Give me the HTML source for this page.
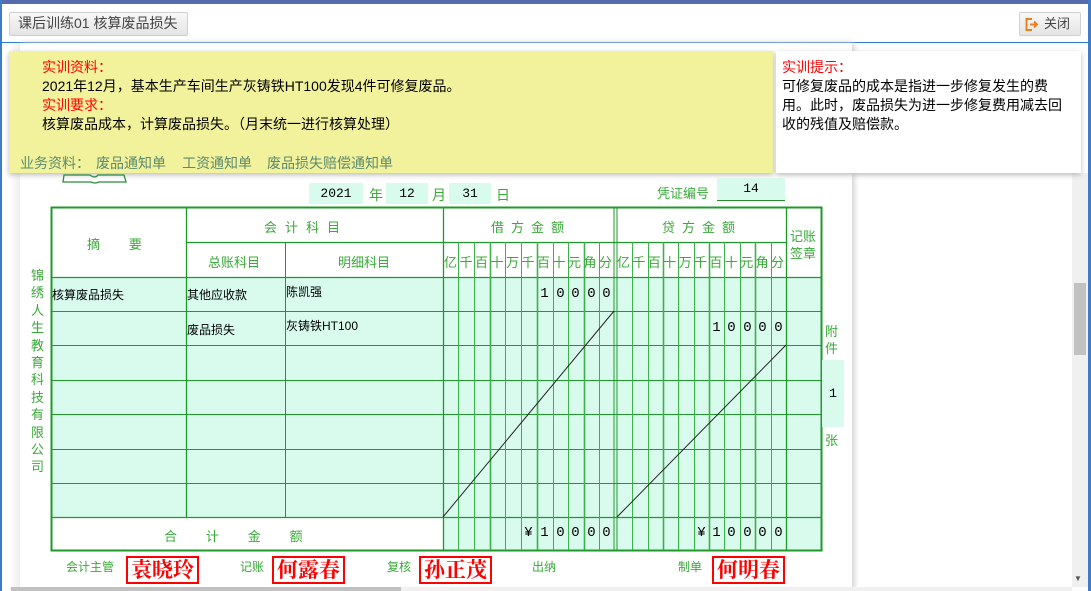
<!DOCTYPE html>
<html><head><meta charset="utf-8">
<style>
*{margin:0;padding:0;box-sizing:border-box}
body{width:1091px;height:591px;overflow:hidden;background:#fff;font-family:"Liberation Sans","Noto Sans CJK SC",sans-serif;position:relative}
.a{position:absolute;white-space:nowrap}
.g{color:#3aa83a}
.btn{position:absolute;border:1px solid #d0d0d0;border-radius:2px;background:linear-gradient(#f8f8f8,#e4e4e4);font-size:13px;color:#444;line-height:21px}
.box{position:absolute;background:#d8fbee;font-family:"Liberation Mono",monospace;font-size:13px;text-align:center;color:#000}
.sig{position:absolute;border:2px solid #f00;color:#f00;font-weight:bold;font-size:21px;font-family:"Liberation Serif","Noto Serif CJK SC",serif;line-height:24px;padding:0 3px;background:#fff}
.d{position:absolute;font-family:"Liberation Mono",monospace;font-size:14px;width:15px;text-align:center}
.y{position:absolute;font-size:14px;line-height:19px;white-space:nowrap}
</style></head><body>
<div class="a" style="left:0;top:0;width:1091px;height:4px;background:#566bad"></div>
<div class="a" style="left:0;top:0;width:2px;height:591px;background:#3e7cc8"></div>
<div class="a" style="left:1088px;top:0;width:3px;height:591px;background:#3e7cc8"></div>
<div class="a" style="left:0;top:42px;width:1091px;height:1px;background:#2b7fd0"></div>
<div class="btn" style="left:9px;top:12px;width:179px;height:24px;padding-left:8px;font-size:14px">课后训练01 核算废品损失</div>
<div class="btn" style="left:1019px;top:12px;width:62px;height:24px;padding-left:24px">关闭
<svg style="position:absolute;left:5px;top:5px" width="14" height="13"><path d="M7 1H1.5V12H7" fill="none" stroke="#e8821e" stroke-width="2"/><path d="M5 6.5H11M9 3.5L12 6.5L9 9.5" fill="none" stroke="#e8821e" stroke-width="2"/></svg></div>

<div class="a" style="left:20px;top:43px;width:832px;height:548px;background:#fff;box-shadow:2px 0 6px #ccc"></div>
<div class="a" style="left:10px;top:43px;width:10px;height:548px;background:linear-gradient(90deg,#fff,#eee)"></div>
<div class="a" style="left:1072px;top:173px;width:16px;height:414px;background:#f0f0f0"></div>
<div class="a" style="left:1074px;top:283px;width:12px;height:72px;background:#c1c1c1"></div>
<div class="a" style="left:1074px;top:574px;font-size:8px;color:#555">▼</div>
<div class="a" style="left:10px;top:587px;width:1062px;height:4px;background:#f0f0f0"></div>
<div class="a" style="left:11px;top:587px;width:390px;height:4px;background:#c1c1c1"></div>

<div class="a" style="left:9px;top:51px;width:764px;height:122px;background:#f2f29c;box-shadow:0 2px 5px #bbb"></div>
<div class="y" style="left:42px;top:58px;color:#f00">实训资料：</div>
<div class="y" style="left:42px;top:77px;color:#000">2021年12月，基本生产车间生产灰铸铁HT100发现4件可修复废品。</div>
<div class="y" style="left:42px;top:96px;color:#f00">实训要求：</div>
<div class="y" style="left:42px;top:115px;color:#000">核算废品成本，计算废品损失。（月末统一进行核算处理）</div>
<div class="y" style="left:20px;top:154px;color:#5b8a6e">业务资料：</div>
<div class="y" style="left:96px;top:154px;color:#5b8a6e">废品通知单</div>
<div class="y" style="left:182px;top:154px;color:#5b8a6e">工资通知单</div>
<div class="y" style="left:267px;top:154px;color:#5b8a6e">废品损失赔偿通知单</div>
<div class="a" style="left:776px;top:51px;width:305px;height:122px;background:#fff;box-shadow:0 2px 5px #bbb"></div>
<div class="y" style="left:782px;top:58px;color:#f00">实训提示：</div>
<div class="y" style="left:782px;top:77px;width:284px;color:#000;white-space:normal">可修复废品的成本是指进一步修复发生的费用。此时，废品损失为进一步修复费用减去回收的残值及赔偿款。</div>

<svg class="a" style="left:62px;top:173px" width="66" height="12"><path d="M2 2H28Q33 6 36 2H62L64 9H37Q33 11 29 9H1Z" fill="none" stroke="#2e8b3a" stroke-width="1.3"/></svg>

<div class="box" style="left:309px;top:183px;width:54px;height:21px;line-height:21px">2021</div>
<div class="a g" style="left:369px;top:185px;font-size:14px">年</div>
<div class="box" style="left:386px;top:183px;width:42px;height:21px;line-height:21px">12</div>
<div class="a g" style="left:432px;top:185px;font-size:14px">月</div>
<div class="box" style="left:449px;top:183px;width:42px;height:21px;line-height:21px">31</div>
<div class="a g" style="left:496px;top:185px;font-size:14px">日</div>
<div class="a g" style="left:657px;top:183px;font-size:13px">凭证编号</div>
<div class="box" style="left:717px;top:178px;width:68px;height:23px;line-height:21px;border-bottom:1px solid #2a8a2a">14</div>

<div class="a" style="left:51px;top:277px;width:770px;height:240px;background:#d8fbee"></div>
<div class="a" style="left:443px;top:517px;width:378px;height:33px;background:#d8fbee"></div>
<svg class="a" style="left:0;top:0" width="1091" height="591">
<g stroke="#1f9a2a" stroke-width="1" fill="none">
<rect x="51.5" y="207.5" width="770" height="343" stroke-width="2"/>
<line x1="186.5" y1="207" x2="186.5" y2="517" stroke-width="1.3"/>
<line x1="285.5" y1="242" x2="285.5" y2="517"/>
<line x1="443.5" y1="207" x2="443.5" y2="550" stroke-width="1.3"/>
<line x1="614" y1="207" x2="614" y2="550"/>
<line x1="617" y1="207" x2="617" y2="550"/>
<line x1="786.5" y1="207" x2="786.5" y2="550" stroke-width="1.3"/>
<line x1="186" y1="242.5" x2="786" y2="242.5" stroke-width="1.3"/>
<line x1="51" y1="277.5" x2="821" y2="277.5" stroke-width="1.3"/>
<line x1="51" y1="311.5" x2="821" y2="311.5"/>
<line x1="51" y1="345.5" x2="821" y2="345.5"/>
<line x1="51" y1="380.5" x2="821" y2="380.5"/>
<line x1="51" y1="414.5" x2="821" y2="414.5"/>
<line x1="51" y1="449.5" x2="821" y2="449.5"/>
<line x1="51" y1="483.5" x2="821" y2="483.5"/>
<line x1="51" y1="517.5" x2="821" y2="517.5" stroke-width="1.3"/>
</g>
<g stroke="#3cb04a" stroke-width="1">
<line x1="458.5" y1="242" x2="458.5" y2="550"/><line x1="474.5" y1="242" x2="474.5" y2="550"/><line x1="490.5" y1="242" x2="490.5" y2="550" stroke-width="1.6"/><line x1="505.5" y1="242" x2="505.5" y2="550"/><line x1="521.5" y1="242" x2="521.5" y2="550"/><line x1="537.5" y1="242" x2="537.5" y2="550" stroke-width="1.6"/><line x1="553.5" y1="242" x2="553.5" y2="550"/><line x1="568.5" y1="242" x2="568.5" y2="550"/><line x1="584.5" y1="242" x2="584.5" y2="550" stroke-width="1.6"/><line x1="599.5" y1="242" x2="599.5" y2="550"/>
<line x1="632.5" y1="242" x2="632.5" y2="550"/><line x1="648.5" y1="242" x2="648.5" y2="550"/><line x1="663.5" y1="242" x2="663.5" y2="550" stroke-width="1.6"/><line x1="678.5" y1="242" x2="678.5" y2="550"/><line x1="694.5" y1="242" x2="694.5" y2="550"/><line x1="709.5" y1="242" x2="709.5" y2="550" stroke-width="1.6"/><line x1="724.5" y1="242" x2="724.5" y2="550"/><line x1="740.5" y1="242" x2="740.5" y2="550"/><line x1="755.5" y1="242" x2="755.5" y2="550" stroke-width="1.6"/><line x1="771.5" y1="242" x2="771.5" y2="550"/>
</g>
<line x1="443" y1="517" x2="614" y2="311" stroke="#222" stroke-width="1"/>
<line x1="617" y1="517" x2="786" y2="345" stroke="#222" stroke-width="1"/>
</svg>
<div class="a g" style="left:87px;top:234px;font-size:13px">摘&nbsp;&nbsp;&nbsp;&nbsp;&nbsp;&nbsp;&nbsp;&nbsp;要</div>
<div class="a g" style="left:264px;top:217px;font-size:13px;letter-spacing:8px">会计科目</div>
<div class="a g" style="left:208px;top:252px;font-size:13px">总账科目</div>
<div class="a g" style="left:338px;top:252px;font-size:13px">明细科目</div>
<div class="a g" style="left:491px;top:217px;font-size:13px;letter-spacing:7px">借方金额</div>
<div class="a g" style="left:662px;top:217px;font-size:13px;letter-spacing:7px">贷方金额</div>
<div class="a g" style="left:790px;top:228px;font-size:13px;line-height:17px;white-space:normal;width:30px">记账签章</div>
<div class="a g" style="left:444px;top:252px;font-size:13px;letter-spacing:2.5px">亿千百十万千百十元角分</div>
<div class="a g" style="left:617px;top:252px;font-size:13px;letter-spacing:2.4px">亿千百十万千百十元角分</div>
<div class="a g" style="left:31px;top:267px;font-size:13px;line-height:17.4px;width:14px;white-space:normal">锦绣人生教育科技有限公司</div>
<div class="a" style="left:52px;top:286px;font-size:12px">核算废品损失</div>
<div class="a" style="left:187px;top:286px;font-size:12px">其他应收款</div>
<div class="a" style="left:286px;top:283px;font-size:12px">陈凯强</div>
<div class="a" style="left:187px;top:321px;font-size:12px">废品损失</div>
<div class="a" style="left:286px;top:317px;font-size:12px">灰铸铁HT100</div>
<div class="d" style="left:537px;top:286px">1</div><div class="d" style="left:553px;top:286px">0</div><div class="d" style="left:568px;top:286px">0</div><div class="d" style="left:584px;top:286px">0</div><div class="d" style="left:599px;top:286px">0</div>
<div class="d" style="left:709px;top:320px">1</div><div class="d" style="left:724px;top:320px">0</div><div class="d" style="left:740px;top:320px">0</div><div class="d" style="left:755px;top:320px">0</div><div class="d" style="left:771px;top:320px">0</div>
<div class="a g" style="left:164px;top:526px;font-size:13px">合&nbsp;&nbsp;&nbsp;&nbsp;&nbsp;&nbsp;&nbsp;&nbsp;计&nbsp;&nbsp;&nbsp;&nbsp;&nbsp;&nbsp;&nbsp;&nbsp;金&nbsp;&nbsp;&nbsp;&nbsp;&nbsp;&nbsp;&nbsp;&nbsp;额</div>
<div class="d" style="left:521px;top:525px">¥</div><div class="d" style="left:537px;top:525px">1</div><div class="d" style="left:553px;top:525px">0</div><div class="d" style="left:568px;top:525px">0</div><div class="d" style="left:584px;top:525px">0</div><div class="d" style="left:599px;top:525px">0</div>
<div class="d" style="left:694px;top:525px">¥</div><div class="d" style="left:709px;top:525px">1</div><div class="d" style="left:724px;top:525px">0</div><div class="d" style="left:740px;top:525px">0</div><div class="d" style="left:755px;top:525px">0</div><div class="d" style="left:771px;top:525px">0</div>
<div class="a g" style="left:825px;top:323px;font-size:13px;line-height:17px;width:14px;white-space:normal">附件</div>
<div class="box" style="left:822px;top:360px;width:22px;height:67px;line-height:67px">1</div>
<div class="a g" style="left:825px;top:430px;font-size:13px">张</div>
<div class="a g" style="left:66px;top:558px;font-size:12px">会计主管</div>
<div class="sig" style="left:126px;top:556px">袁晓玲</div>
<div class="a g" style="left:240px;top:558px;font-size:12px">记账</div>
<div class="sig" style="left:272px;top:556px">何露春</div>
<div class="a g" style="left:387px;top:558px;font-size:12px">复核</div>
<div class="sig" style="left:419px;top:556px">孙正茂</div>
<div class="a g" style="left:532px;top:558px;font-size:12px">出纳</div>
<div class="a g" style="left:678px;top:558px;font-size:12px">制单</div>
<div class="sig" style="left:712px;top:556px">何明春</div>
</body></html>
